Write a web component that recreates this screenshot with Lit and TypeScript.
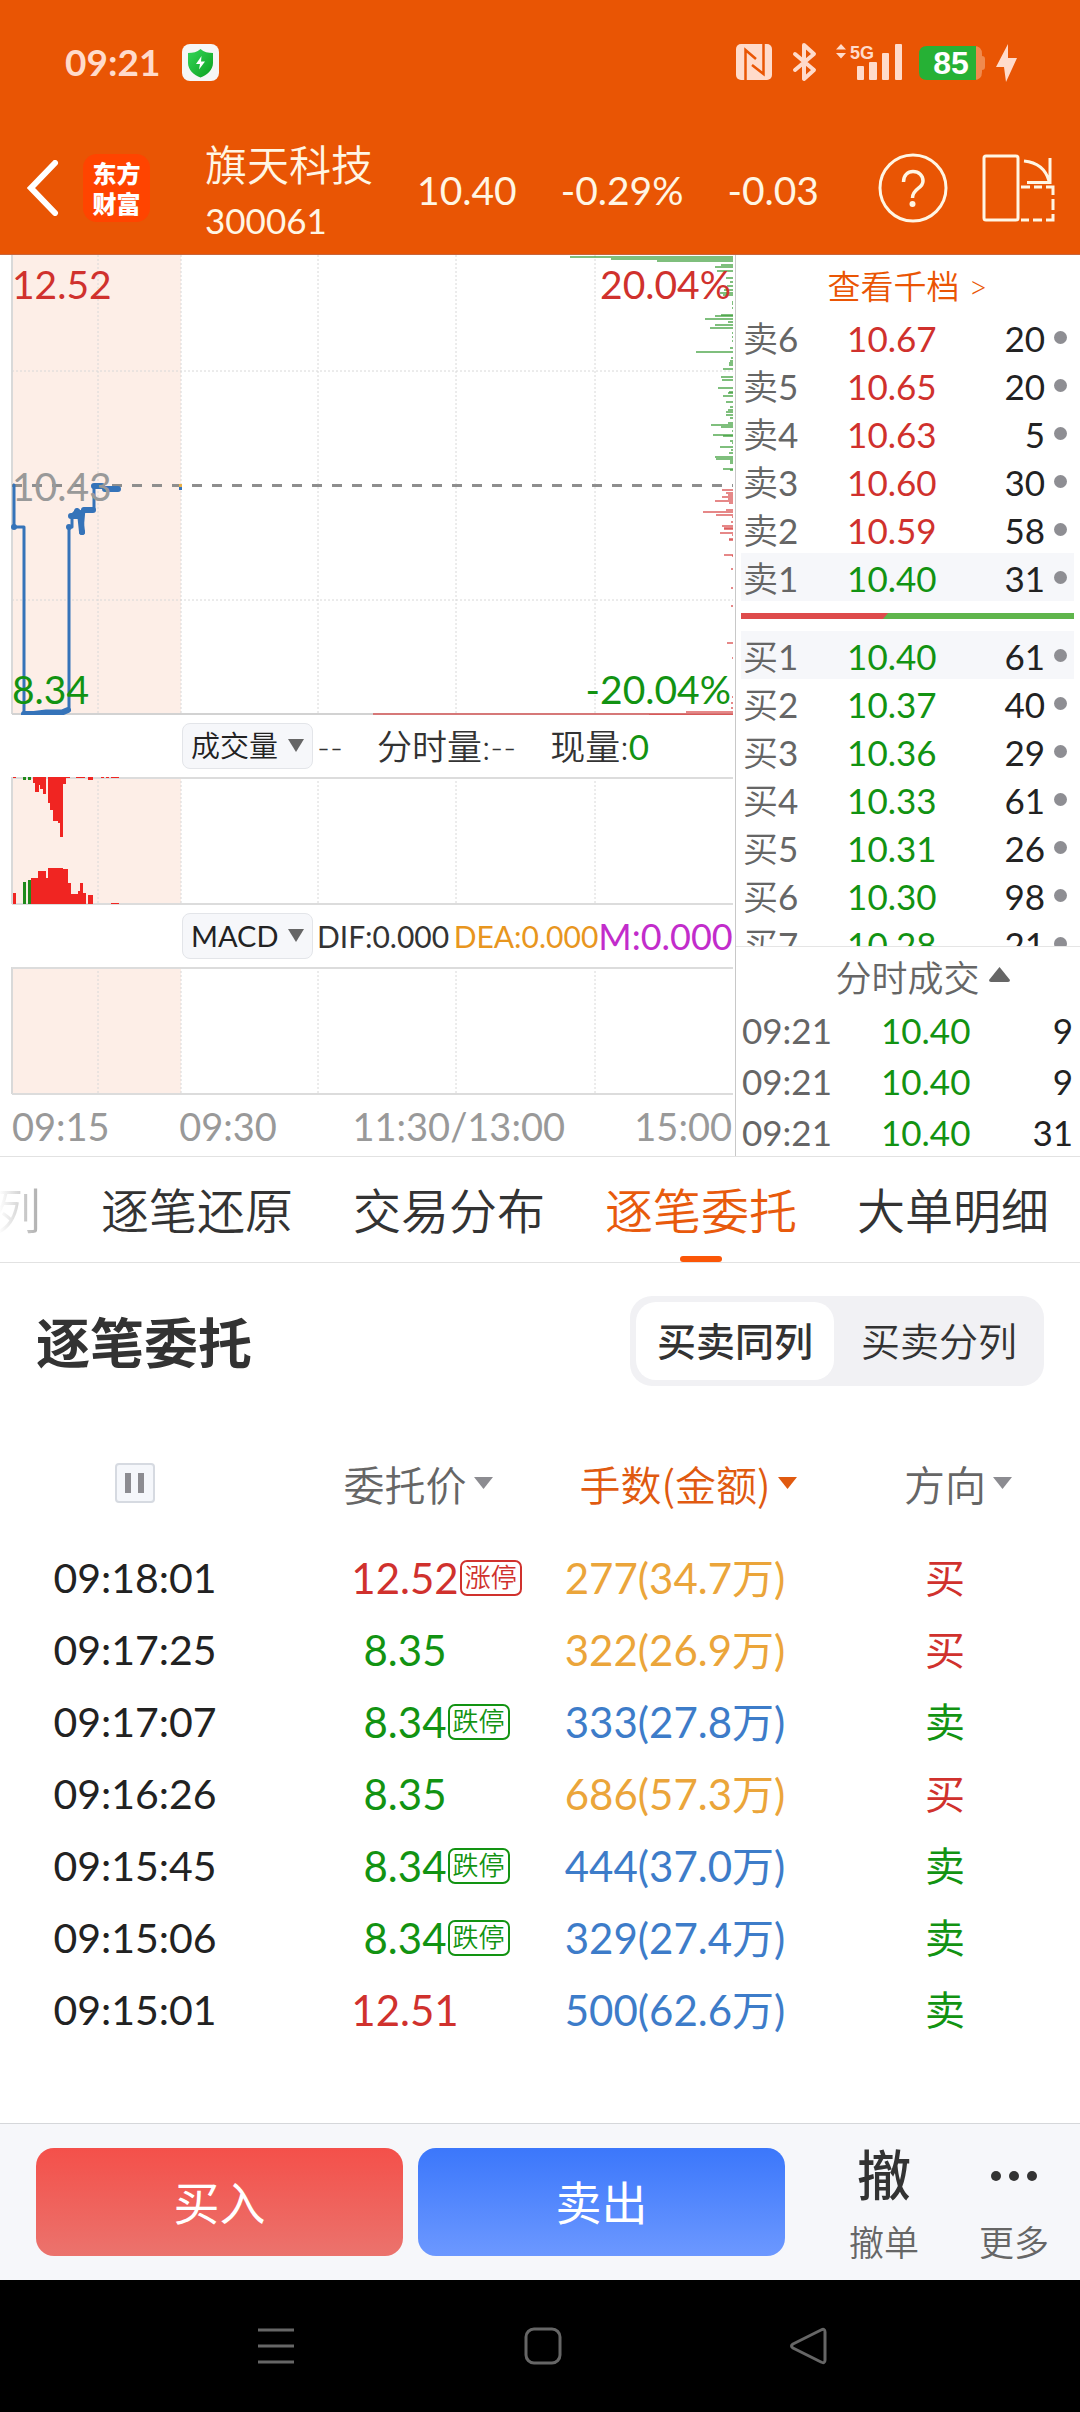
import { LitElement, html, svg, css } from "lit";
import { customElement, property, state } from "lit/decorators.js";
import { classMap } from "lit/directives/class-map.js";

type Tone = "up" | "down";

interface Quote {
  label: string;
  price: string;
  tone: Tone;
  lots: number;
}

interface Order {
  time: string;
  price: string;
  tone: Tone;
  limit?: string;
  amount: string;
  large: boolean;
  side: "买" | "卖";
}

const ASKS: Quote[] = [
  { label: "卖6", price: "10.67", tone: "up", lots: 20 },
  { label: "卖5", price: "10.65", tone: "up", lots: 20 },
  { label: "卖4", price: "10.63", tone: "up", lots: 5 },
  { label: "卖3", price: "10.60", tone: "up", lots: 30 },
  { label: "卖2", price: "10.59", tone: "up", lots: 58 },
  { label: "卖1", price: "10.40", tone: "down", lots: 31 },
];

const BIDS: Quote[] = [
  { label: "买1", price: "10.40", tone: "down", lots: 61 },
  { label: "买2", price: "10.37", tone: "down", lots: 40 },
  { label: "买3", price: "10.36", tone: "down", lots: 29 },
  { label: "买4", price: "10.33", tone: "down", lots: 61 },
  { label: "买5", price: "10.31", tone: "down", lots: 26 },
  { label: "买6", price: "10.30", tone: "down", lots: 98 },
  { label: "买7", price: "10.28", tone: "down", lots: 21 },
];

const TRADES = [
  { time: "09:21", price: "10.40", lots: 9 },
  { time: "09:21", price: "10.40", lots: 9 },
  { time: "09:21", price: "10.40", lots: 31 },
];

const ORDERS: Order[] = [
  { time: "09:18:01", price: "12.52", tone: "up", limit: "涨停", amount: "277(34.7万)", large: true, side: "买" },
  { time: "09:17:25", price: "8.35", tone: "down", amount: "322(26.9万)", large: true, side: "买" },
  { time: "09:17:07", price: "8.34", tone: "down", limit: "跌停", amount: "333(27.8万)", large: false, side: "卖" },
  { time: "09:16:26", price: "8.35", tone: "down", amount: "686(57.3万)", large: true, side: "买" },
  { time: "09:15:45", price: "8.34", tone: "down", limit: "跌停", amount: "444(37.0万)", large: false, side: "卖" },
  { time: "09:15:06", price: "8.34", tone: "down", limit: "跌停", amount: "329(27.4万)", large: false, side: "卖" },
  { time: "09:15:01", price: "12.51", tone: "up", amount: "500(62.6万)", large: false, side: "卖" },
];

/* Resting volume per price level: [y, length], drawn leftwards from the right edge. */
const DEPTH_SELL: [number, number][] = [
  [1, 163], [3, 122], [5, 76], [9, 12], [11, 18], [15, 16], [22, 7], [26, 3], [30, 6], [34, 9], [37, 13], [39, 10],
  [46, 1], [48, 1], [52, 1], [59, 12], [60, 18], [63, 28], [66, 5], [69, 18], [72, 23], [77, 1], [81, 1], [85, 1],
  [92, 3], [96, 37], [102, 2], [105, 3], [107, 4], [109, 4], [113, 10], [121, 12], [124, 11], [132, 15], [136, 4],
  [137, 5], [140, 10], [146, 7], [151, 3], [154, 5], [156, 7], [159, 7], [162, 3], [167, 5], [169, 22], [171, 12],
  [175, 1], [179, 20], [180, 10], [185, 3], [187, 1], [191, 13], [194, 2], [197, 4], [201, 18], [203, 17], [205, 3],
  [207, 3], [213, 10], [214, 3],
];
const DEPTH_BUY: [number, number][] = [
  [234, 11], [237, 7], [239, 5], [241, 11], [243, 5], [245, 18], [247, 4], [254, 7], [256, 30], [259, 17], [261, 1],
  [266, 2], [270, 11], [272, 9], [273, 9], [277, 13], [279, 1], [283, 4], [284, 4], [299, 9], [300, 1], [313, 2],
  [332, 2], [350, 2], [387, 6], [402, 1], [441, 1], [447, 2], [452, 2], [456, 47], [458, 360], [459, 84],
];

/* Auction volume bars: [x, width, height]. */
const VOL_TOP: [number, number, number][] = [
  [13, 3, 1], [33, 8, 6], [35, 4, 15], [38, 2, 8], [40, 3, 12], [43, 3, 17], [48, 2, 26], [50, 3, 33], [53, 5, 44],
  [58, 2, 46], [60, 3, 60], [63, 3, 7], [66, 4, 1], [76, 9, 1], [88, 5, 3], [101, 3, 1], [106, 3, 1], [111, 8, 1],
];
const VOL_BOTTOM: [number, number, number][] = [
  [13, 3, 11], [31, 7, 26], [38, 8, 33], [46, 2, 26], [48, 15, 36], [63, 5, 35], [68, 3, 21], [70, 8, 10],
  [78, 3, 13], [80, 3, 21], [83, 3, 11], [88, 5, 9], [111, 8, 1],
];

const GRID_X = [98, 181, 318, 456, 595];

@customElement("status-bar")
export class StatusBar extends LitElement {
  static styles = css`
    :host { display: block; color: #ffdbcb; }
    .bar { display: flex; align-items: center; height: 124px; padding: 0 61px 0 65px; }
    .time { font: 700 37px/44px Lato, sans-serif; margin-right: 22px; }
    .icons { margin-left: auto; }
    svg { display: block; }
    text { font-family: "Liberation Sans", sans-serif; font-weight: 700; }
  `;
  render() {
    return html`
      <div class="bar">
        <span class="time">09:21</span>
        <svg width="37" height="37" viewBox="0 0 37 37" aria-hidden="true">
          <defs>
            <linearGradient id="sh" x1="0" y1="0" x2="1" y2="1">
              <stop offset="0" stop-color="#35d65a" /><stop offset="1" stop-color="#0ba01d" />
            </linearGradient>
          </defs>
          <rect width="37" height="37" rx="8" fill="#f6f6f6" />
          <path d="M18.500 5C22 8 26 9 31 9V19C31 26 25 31 18.500 33.500C12 31 6 26 6 19V9C11 9 15 8 18.500 5Z" fill="url(#sh)" />
          <path d="M19.500 12L14 20H18L17 25.500L23 17.500H19Z" fill="#fff" />
        </svg>
        <svg class="icons" width="284" height="44" viewBox="0 0 284 44" role="img" aria-label="NFC 蓝牙 5G 电量85">
          <rect x="1" y="4" width="36" height="36" rx="5" fill="#ffdbcb" />
          <path d="M10.500 41V10L21 19M28.500 3V34L17 25" fill="none" stroke="#e95504" stroke-width="2.500" />
          <path d="M60 14L79 30L69 39V5L79 14L60 30" fill="none" stroke="#ffdbcb" stroke-width="4" stroke-linejoin="round" stroke-linecap="round" />
          <path d="M106 4L111 9.500H101ZM106 18.500L111 13H101Z" fill="#ffdbcb" />
          <text x="115" y="19" font-size="18" fill="#ffdbcb">5G</text>
          <g fill="#ffdbcb">
            <rect x="122" y="26" width="7" height="14" rx="1" /><rect x="134" y="22" width="8" height="18" rx="1" />
            <rect x="147" y="13" width="7" height="27" rx="1" /><rect x="160" y="4" width="7" height="36" rx="1" />
          </g>
          <path d="M192 6H239Q247 6 247 14V16Q250 16 250 19V27Q250 30 247 30V32Q247 40 239 40H192Z" fill="#f08a4e" />
          <path d="M192 6H241V40H192Q184 40 184 32V14Q184 6 192 6Z" fill="#26b135" />
          <text x="216" y="34" font-size="32" text-anchor="middle" fill="#fff">85</text>
          <path d="M273 4L261 27H269L271 42L282 18H273Z" fill="#ffdbcb" />
        </svg>
      </div>
    `;
  }
}

@customElement("stock-header")
export class StockHeader extends LitElement {
  static styles = css`
    :host { display: block; color: #fff6e4; }
    .bar { display: flex; align-items: center; box-sizing: border-box; height: 130px; padding: 0 25px 3px 27px; }
    button { border: 0; background: none; padding: 0; color: inherit; }
    svg { display: block; }
    .logo {
      width: 67px; height: 68px; border-radius: 14px; margin: 0 55px 0 24px; background: #ff4400; color: #fff;
      font: 900 24px/30px "Noto Sans CJK SC", sans-serif; display: flex; flex-direction: column;
      justify-content: center; align-items: center;
    }
    .id { padding-top: 13px; }
    .name { font: 350 42px/52px Lato, "Noto Sans CJK SC", sans-serif; }
    .code { font: 400 35px/58px Lato, sans-serif; }
    .nums { flex: 1; display: flex; justify-content: space-between; margin: 4px 59px 0 44px; font: 400 39px/48px Lato, sans-serif; }
    .tools { display: flex; align-items: center; gap: 34px; }
  `;
  render() {
    return html`
      <header class="bar">
        <button aria-label="返回">
          <svg width="32" height="56" viewBox="0 0 32 56"><path d="M28 3L4 28L28 53" fill="none" stroke="#fff" stroke-width="6" stroke-linecap="round" stroke-linejoin="miter" /></svg>
        </button>
        <div class="logo"><span>东方</span><span>财富</span></div>
        <div class="id"><div class="name">旗天科技</div><div class="code">300061</div></div>
        <div class="nums"><span>10.40</span><span>-0.29%</span><span>-0.03</span></div>
        <div class="tools">
          <button aria-label="帮助">
            <svg width="70" height="70" viewBox="0 0 70 70">
              <circle cx="35" cy="35" r="33" fill="none" stroke="currentColor" stroke-width="3" />
              <path d="M25.500 29C25.500 22 30 18.500 35 18.500C41 18.500 45 22.500 45 28C45 36 34.500 35 34.500 45" fill="none" stroke="currentColor" stroke-width="3.500" />
              <circle cx="34.500" cy="51" r="3" fill="currentColor" />
            </svg>
          </button>
          <button aria-label="横屏">
            <svg width="73" height="70" viewBox="0 0 73 70" fill="none" stroke="currentColor" stroke-width="3">
              <rect x="2" y="3" width="34" height="64" rx="2" />
              <path d="M42 8Q62 10 67 28M68 5V29.500H45" />
              <path d="M39 34H48M52 34H60M64 34H71V42M71 46V57M71 61V67H64M60 67H51M47 67H39" />
            </svg>
          </button>
        </div>
      </header>
    `;
  }
}

@customElement("price-chart")
export class PriceChart extends LitElement {
  static styles = css`
    :host { display: block; font: 400 38px/46px Lato, "Noto Sans CJK SC", sans-serif; color: #333; }
    svg { display: block; width: 100%; height: auto; }
    .main { position: relative; }
    .tag { position: absolute; font-size: 39px; }
    .hi { top: 6px; color: #d0312d; }
    .lo { bottom: 3px; color: #129312; }
    .mid { top: 208px; color: #999; }
    .l { left: 12px; }
    .r { right: 4px; }
    .strip { display: flex; align-items: center; height: 62px; padding-left: 182px; font-size: 35px; font-weight: 350; }
    .pick { position: relative; flex: none; margin-right: 4px; }
    select {
      appearance: none; width: 131px; height: 46px; border: 1px solid #e3e5e9; border-radius: 8px; background: #f6f7fa;
      padding: 0 0 0 8px; color: #222; font: 350 29px/44px Lato, "Noto Sans CJK SC", sans-serif; display: block;
    }
    select.latin { font-weight: 400; }
    .pick svg { position: absolute; right: 9px; top: 16px; width: 16px; height: 14px; pointer-events: none; }
    .vols { display: flex; gap: 34px; white-space: nowrap; }
    .vols b { font-weight: 400; }
    .green { color: #129312; }
    .macd { flex: 1; display: grid; grid-template-columns: repeat(3, 1fr); align-items: center; font-size: 30px; font-weight: 400; }
    .macd .m { font-size: 36px; }
    .dea { color: #e8961e; }
    .m { color: #c22ccb; }
    .axis { display: grid; grid-template-columns: 167fr 173fr 240fr 139fr; height: 61px; line-height: 62px; padding: 0 3px 0 12px; color: #999; }
    .axis :last-child { text-align: right; }
  `;

  private grid(height: number) {
    return svg`
      <rect x="12" y="0" width="169" height=${height} fill="#fdeee7" />
      ${GRID_X.map((x) => svg`<line x1=${x} x2=${x} y1="0" y2=${height} stroke="#d8d8d8" stroke-width="1" stroke-dasharray="2 2" />`)}
      <line x1="12" x2="12" y1="0" y2=${height} stroke="#d9d9d9" stroke-width="2" />
    `;
  }

  private depth(rows: [number, number][], color: string) {
    return rows.map(([y, len]) => svg`<rect x=${733 - len} y=${y} width=${len} height="2" fill=${color} fill-opacity="0.65" />`);
  }

  render() {
    return html`
      <div class="main">
        <svg viewBox="0 0 735 460" role="img" aria-label="分时走势">
          ${this.grid(459)}
          <g stroke="#d8d8d8" stroke-dasharray="2 2"><path d="M12 116H733M12 345H733" /></g>
          <path d="M12 459H733" stroke="#d2d2d2" stroke-width="2" />
          <path d="M12 230.500H733" stroke="#8e8e8e" stroke-width="3" stroke-dasharray="10 10" />
          ${this.depth(DEPTH_SELL, "#3a9d38")} ${this.depth(DEPTH_BUY, "#d94848")}
          <path d="M13 230H14V272H24V459H32L46 457L62 457L69 455V272H72V260L76 256L79 256L82 276L84 254H94V231H101L106 234H119" fill="none" stroke="#3573b9" stroke-width="3" stroke-linejoin="round" />
          <path d="M24 459H34L46 457.500H62L68 455M71 261H76L77 256M80 258L82 277M84 255H93M105 234H118M94 231H102" fill="none" stroke="#3573b9" stroke-width="6" stroke-linecap="round" />
          <g fill="#3573b9"><circle cx="14" cy="272" r="3" /><circle cx="69" cy="272" r="3" /><circle cx="82" cy="277" r="3" /><rect x="179" y="232" width="3" height="3" /></g>
          <rect x="179" y="229" width="3" height="3" fill="#e8b04a" />
        </svg>
        <span class="tag hi l">12.52</span><span class="tag hi r">20.04%</span>
        <span class="tag mid l">10.43</span>
        <span class="tag lo l">8.34</span><span class="tag lo r">-20.04%</span>
      </div>
      <div class="strip">
        <span class="pick">
          <select aria-label="副图指标一"><option>成交量</option></select>
          <svg viewBox="0 0 16 14" aria-hidden="true"><path d="M0 0H16L8 13Z" fill="#666" /></svg>
        </span>
        <div class="vols"><span>--</span><span>分时量:--</span><span>现量:<b class="green">0</b></span></div>
      </div>
      <svg viewBox="0 0 735 128" role="img" aria-label="成交量图">
        ${this.grid(127)}
        <path d="M12 1H733M12 127H733" stroke="#dcdcdc" stroke-width="2" />
        ${VOL_TOP.map(([x, w, h]) => svg`<rect x=${x} y="0" width=${w} height=${h} fill="#f02522" />`)}
        ${VOL_BOTTOM.map(([x, w, h]) => svg`<rect x=${x} y=${127 - h} width=${w} height=${h} fill="#f02522" />`)}
        <path d="M23 0H26V3H23ZM28 0H31V3H28ZM23 105H26V127H23ZM28 103H31V127H28Z" fill="#1f8a1c" />
      </svg>
      <div class="strip">
        <span class="pick">
          <select class="latin" aria-label="副图指标二"><option>MACD</option></select>
          <svg viewBox="0 0 16 14" aria-hidden="true"><path d="M0 0H16L8 13Z" fill="#666" /></svg>
        </span>
        <div class="macd"><span>DIF:0.000</span><span class="dea">DEA:0.000</span><span class="m">M:0.000</span></div>
      </div>
      <svg viewBox="0 0 735 128" role="img" aria-label="MACD图">
        ${this.grid(127)}
        <path d="M12 1H733M12 127H733" stroke="#dcdcdc" stroke-width="2" />
      </svg>
      <div class="axis"><span>09:15</span><span>09:30</span><span>11:30/13:00</span><span>15:00</span></div>
    `;
  }
}

@customElement("order-book")
export class OrderBook extends LitElement {
  static styles = css`
    :host { display: flex; flex-direction: column; min-width: 0; font: 400 35px/44px Lato, "Noto Sans CJK SC", sans-serif; color: #222; }
    .book { flex: 1 1 0; min-height: 0; overflow: hidden; padding: 0 6px 0 5px; }
    .all { display: block; height: 58px; line-height: 62px; text-align: center; font-size: 33px; font-weight: 350; color: #ea5504; text-decoration: none; }
    table { width: 100%; border-collapse: collapse; table-layout: fixed; }
    td { padding: 2px 0 0; height: 46px; }
    .label { width: 25%; padding-left: 2px; color: #666; font-weight: 350; }
    .label b { font-weight: 400; }
    .price { text-align: center; }
    .up { color: #d0312d; }
    .down { color: #129312; }
    .lots { width: 35%; text-align: right; }
    .dot { display: inline-block; width: 13px; height: 13px; border-radius: 50%; background: #8e8e93; margin: 0 7px 0 9px; vertical-align: 8px; }
    .best { background: #f6f7fa; }
    .ratio { height: 6px; margin: 12px 0; background: #5fb54c; }
    .ratio svg { display: block; width: 100%; height: 6px; }
    .trades { border-top: 1px solid #e5e5e5; padding: 6px 7px 0 6px; }
    .toggle {
      display: flex; align-items: center; justify-content: center; gap: 9px; width: 100%; height: 50px; border: 0; padding: 0 0 0 30px; background: none;
      font: 350 36px/50px Lato, "Noto Sans CJK SC", sans-serif; color: #666;
    }
    .toggle svg { margin-bottom: 8px; }
    .trades td { height: 48px; padding-top: 3px; }
    .trades .time { width: 33%; color: #666; }
    .trades .lots { width: 22%; }
  `;

  private rows(quotes: Quote[], best: number) {
    return html`<table><tbody>
      ${quotes.map((q, i) => html`
        <tr class=${classMap({ best: i === best })}>
          <td class="label">${q.label[0]}<b>${q.label[1]}</b></td>
          <td class="price ${q.tone}">${q.price}</td>
          <td class="lots">${q.lots}<i class="dot"></i></td>
        </tr>`)}
    </tbody></table>`;
  }

  render() {
    return html`
      <div class="book">
        <a class="all" href="#levels">查看千档 &gt;</a>
        ${this.rows(ASKS, 5)}
        <div class="ratio">
          <svg viewBox="0 0 333 6" preserveAspectRatio="none" aria-hidden="true"><path d="M0 0H147L142 6H0Z" fill="#de4b4b" /></svg>
        </div>
        ${this.rows(BIDS, 0)}
      </div>
      <div class="trades">
        <button class="toggle">分时成交<svg width="21" height="15" viewBox="0 0 21 15" aria-hidden="true"><path d="M10.500 0L21 13Q21 15 19 15H2Q0 15 0 13Z" fill="#666" /></svg></button>
        <table><tbody>
          ${TRADES.map((t) => html`<tr><td class="time">${t.time}</td><td class="price down">${t.price}</td><td class="lots">${t.lots}</td></tr>`)}
        </tbody></table>
      </div>
    `;
  }
}

@customElement("order-flow")
export class OrderFlow extends LitElement {
  static styles = css`
    :host { display: block; font-family: Lato, "Noto Sans CJK SC", sans-serif; color: #222; }
    button { border: 0; padding: 0; background: none; font: inherit; color: inherit; }
    .head { display: flex; align-items: flex-start; justify-content: space-between; padding: 33px 36px 0 36px; }
    h2 { margin: 0; font-size: 54px; line-height: 96px; font-weight: 700; color: #333; }
    .seg { display: flex; gap: 6px; background: #f1f1f4; border-radius: 22px; padding: 6px; }
    .seg button { width: 198px; height: 78px; border-radius: 20px; font-size: 39px; line-height: 78px; font-weight: 350; color: #333; }
    .seg .on { background: #fff; font-weight: 500; }
    table { width: 100%; border-collapse: collapse; table-layout: fixed; margin-top: 55px; }
    th, td { padding: 0; text-align: center; }
    th { height: 72px; padding-bottom: 23px; font-family: "Noto Sans CJK SC", sans-serif; font-size: 41px; line-height: 60px; font-weight: 350; color: #666; }
    td { height: 72px; font-size: 42px; line-height: 60px; }
    .time { font-size: 41px; }
    .pause { display: block; margin: 0 auto; }
    .pause svg { display: block; }
    .sort, .num { position: relative; display: inline-block; }
    .sort svg { position: absolute; left: 100%; top: 24px; margin-left: 7px; color: #8c8c91; }
    .sort.on, .sort.on svg { color: #e05a10; }
    .up { color: #d0312d; }
    .down { color: #129312; }
    .badge {
      position: absolute; left: 100%; top: 12px; margin-left: 1px; border: 2px solid currentColor; border-radius: 7px; height: 32px; padding: 0 3px;
      font-size: 26px; line-height: 31px; font-weight: 350; white-space: nowrap;
    }
    .large { color: #eba53a; }
    .small { color: #3d7cc9; }
    .side { font-size: 40px; font-weight: 400; }
  `;

  @state() private merged = true;

  private caret() {
    return html`<svg width="19" height="12" viewBox="0 0 19 12" aria-hidden="true"><path d="M0 0H19L9.500 12Z" fill="currentColor" /></svg>`;
  }

  render() {
    return html`
      <div class="head">
        <h2>逐笔委托</h2>
        <div class="seg">
          <button class=${classMap({ on: this.merged })} aria-pressed=${this.merged} @click=${() => (this.merged = true)}>买卖同列</button>
          <button class=${classMap({ on: !this.merged })} aria-pressed=${!this.merged} @click=${() => (this.merged = false)}>买卖分列</button>
        </div>
      </div>
      <table>
        <thead><tr>
          <th><button class="pause" aria-label="暂停">
            <svg width="40" height="40" viewBox="0 0 40 40"><rect x="1" y="1" width="38" height="38" rx="3" fill="#f5f7fb" stroke="#d6dae1" stroke-width="2" /><path d="M13 10V30M26 10V30" stroke="#8c8c91" stroke-width="6" /></svg>
          </button></th>
          <th><button class="sort">委托价${this.caret()}</button></th>
          <th><button class="sort on">手数(金额)${this.caret()}</button></th>
          <th><button class="sort">方向${this.caret()}</button></th>
        </tr></thead>
        <tbody>
          ${ORDERS.map((o) => html`
            <tr>
              <td class="time">${o.time}</td>
              <td><span class="num ${o.tone}">${o.price}${o.limit ? html`<span class="badge">${o.limit}</span>` : null}</span></td>
              <td class=${o.large ? "large" : "small"}>${o.amount}</td>
              <td class="side ${o.side === "买" ? "up" : "down"}">${o.side}</td>
            </tr>`)}
        </tbody>
      </table>
    `;
  }
}

@customElement("trade-bar")
export class TradeBar extends LitElement {
  static styles = css`
    :host { display: block; font-family: Lato, "Noto Sans CJK SC", sans-serif; }
    button { border: 0; padding: 0; background: none; font: inherit; color: #666; }
    .bar { display: flex; align-items: flex-start; box-sizing: border-box; height: 157px; padding: 24px 31px 0 36px; background: #f6f7fa; border-top: 1px solid #d5d7da; }
    .cta { flex: 1; height: 108px; border-radius: 18px; color: #fff; font-size: 46px; line-height: 110px; }
    .buy { background: linear-gradient(#f4504a, #eb736d); margin-right: 15px; }
    .sell { background: linear-gradient(#3b77fb, #6c98ff); margin-right: 64px; }
    .item { display: flex; flex-direction: column; align-items: center; font-size: 35px; line-height: 76px; font-weight: 350; }
    .item + .item { margin-left: 60px; }
    .glyph { height: 56px; line-height: 56px; font-size: 54px; font-weight: 500; color: #333; display: flex; align-items: center; }
  `;
  render() {
    return html`
      <div class="bar">
        <button class="cta buy">买入</button>
        <button class="cta sell">卖出</button>
        <button class="item"><span class="glyph">撤</span><span>撤单</span></button>
        <button class="item">
          <span class="glyph"><svg width="48" height="10" viewBox="0 0 48 10" aria-hidden="true" fill="#333"><circle cx="6" cy="5" r="5" /><circle cx="24" cy="5" r="5" /><circle cx="42" cy="5" r="5" /></svg></span>
          <span>更多</span>
        </button>
      </div>
    `;
  }
}

@customElement("app-root")
export class AppRoot extends LitElement {
  static styles = css`
    :host { display: block; background: #fff; overflow: hidden; }
    .top { background: #e95504; border-bottom: 1px solid #c9653a; }
    .market { display: grid; grid-template-columns: minmax(0, 735fr) minmax(0, 345fr); border-bottom: 1px solid #e2e2e2; }
    order-book { border-left: 1px solid #c8c8c8; }
    .tabs { display: flex; justify-content: flex-end; gap: 60px; padding-right: 31px; border-bottom: 1px solid #e2e2e2; }
    .tabs button {
      flex: none; position: relative; height: 105px; border: 0; padding: 0; background: none; color: #333;
      font: 350 48px/107px Lato, "Noto Sans CJK SC", sans-serif; white-space: nowrap;
    }
    .tabs .faded { color: transparent; background: linear-gradient(90deg, #fff 78%, #aaa); background-clip: text; -webkit-background-clip: text; }
    .tabs .on { color: #e85a0c; }
    .tabs .on::after { content: ""; position: absolute; left: 50%; bottom: 0; width: 42px; height: 6px; margin-left: -21px; border-radius: 3px; background: #fb5607; }
    order-flow { min-height: 860px; }
    .nav { display: flex; align-items: center; justify-content: space-between; height: 132px; padding: 0 252px 0 257px; background: #000; }
    .nav button { border: 0; padding: 0; background: none; }
    .nav svg { display: block; }
  `;

  @property() active = "逐笔委托";

  render() {
    const tabs = ["逐笔队列", "逐笔还原", "交易分布", "逐笔委托", "大单明细"];
    return html`
      <div class="top"><status-bar></status-bar><stock-header></stock-header></div>
      <section class="market"><price-chart></price-chart><order-book></order-book></section>
      <nav class="tabs">
        ${tabs.map((t, i) => html`<button class=${classMap({ on: t === this.active, faded: i === 0 })} @click=${() => (this.active = t)}>${t}</button>`)}
      </nav>
      <order-flow></order-flow>
      <trade-bar></trade-bar>
      <div class="nav">
        <button aria-label="最近任务"><svg width="38" height="38" viewBox="0 0 38 38"><path d="M1 3H37M1 19H37M1 35H37" stroke="#666" stroke-width="3" /></svg></button>
        <button aria-label="主屏幕"><svg width="38" height="38" viewBox="0 0 38 38"><rect x="2" y="2" width="34" height="34" rx="8" fill="none" stroke="#666" stroke-width="3" /></svg></button>
        <button aria-label="返回"><svg width="38" height="38" viewBox="0 0 38 38"><path d="M3 17L31 3Q35 1 35 5V33Q35 37 31 35L3 21Q0 19 3 17Z" fill="none" stroke="#666" stroke-width="3" /></svg></button>
      </div>
    `;
  }
}
